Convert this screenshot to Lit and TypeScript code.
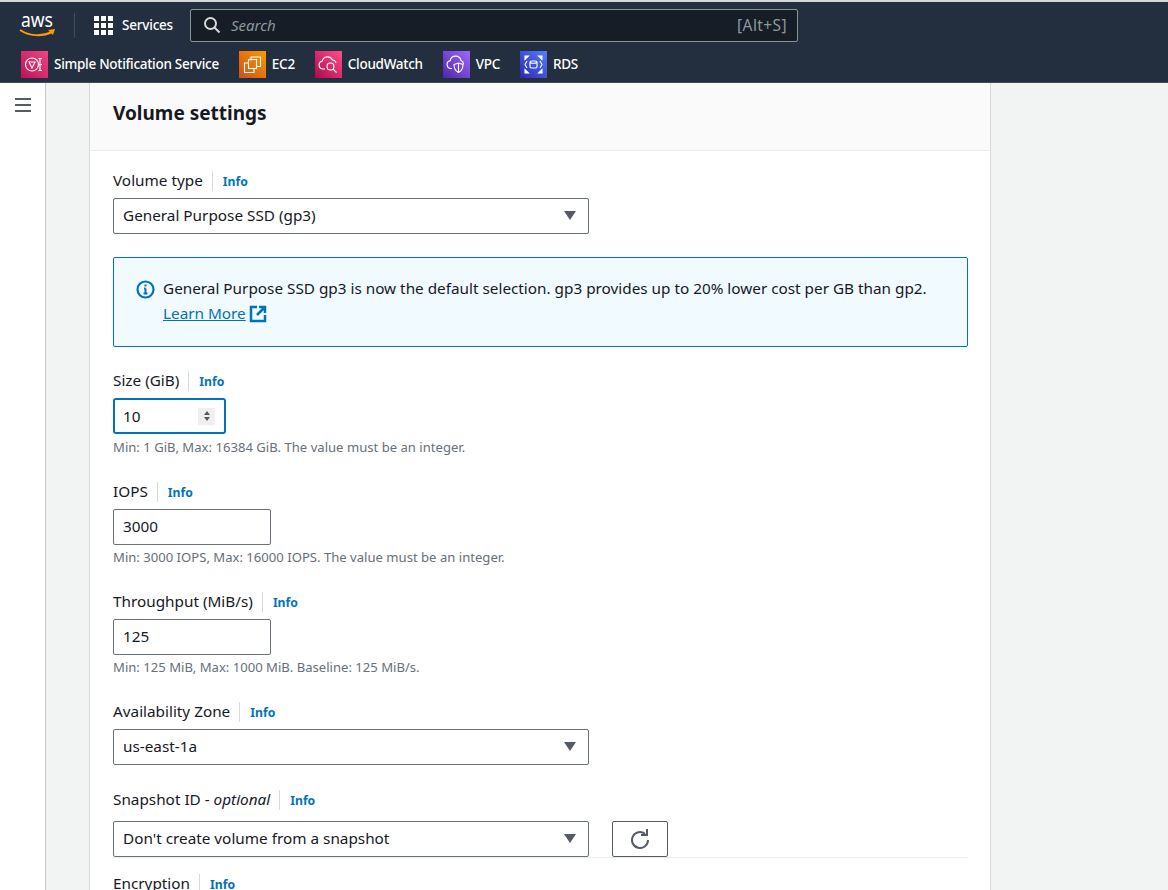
import { LitElement, css, html, svg } from "lit";
import { customElement } from "lit/decorators.js";

const services = [
  {
    name: "Simple Notification Service",
    cls: "sns",
    icon: svg`<circle cx="11" cy="13.5" r="6.5"/><path d="M8 11h6l-3 6z"/><path d="M17.500 7.500h3.500M17.500 13.500h3.500M17.500 19.500h3.500M19 7.500v12"/>`,
  },
  {
    name: "EC2",
    cls: "ec2",
    icon: svg`<path d="M12 9.500V6h9.500v9.500H18"/><rect x="9.500" y="8.500" width="8" height="9"/><path d="M9 12H5.500v9.500H15V18"/>`,
  },
  {
    name: "CloudWatch",
    cls: "cw",
    icon: svg`<path d="M10 18H8a4 4 0 0 1-.8-7.900A5.500 5.500 0 0 1 17.500 9a3.800 3.800 0 0 1 3.500 3"/><circle cx="15.500" cy="15.500" r="3.500"/><path d="M18 18l3.500 3.500"/>`,
  },
  {
    name: "VPC",
    cls: "vpc",
    icon: svg`<path d="M9 17.500H8a4 4 0 0 1-.8-7.900A5.500 5.500 0 0 1 18 9.500a3.800 3.800 0 0 1 2.500 3.500"/><path d="M11 13.500l4.500-1.500 4.500 1.500c0 4-1.500 6.500-4.500 8-3-1.500-4.500-4-4.500-8zM15.500 12v9.500"/>`,
  },
  {
    name: "RDS",
    cls: "rds",
    icon: svg`<rect x="10" y="10" width="7" height="7" rx="1.500"/><path d="M10 11.500c1 1 6 1 7 0M7 10l-2 3.500L7 17M20 10l2 3.500L20 17"/><path d="M5 5h3.500L5 8.500zM22 5h-3.500L22 8.500zM5 22h3.500L5 18.500zM22 22h-3.500l3.500-3.500z" fill="#fff"/>`,
  },
];

@customElement("app-root")
export class AppRoot extends LitElement {
  static styles = css`
    :host {
      display: block;
      height: 890px;
      overflow: hidden;
      font-family: "Noto Sans", "Open Sans", sans-serif;
      font-size: 15.3px;
      color: #16191f;
      background: #f2f3f3;
    }
    * {
      box-sizing: border-box;
    }
    .nav {
      height: 83px;
      background: #232f3e;
      border-top: 2px solid #d5d7d9;
      border-bottom: 1px solid #414d5c;
      color: #fff;
    }
    .nav-top {
      height: 46px;
      display: flex;
      align-items: center;
      padding-left: 20px;
    }
    .aws {
      width: 38px;
      height: 32px;
      flex: none;
      overflow: visible;
    }
    .nav-sep {
      width: 1px;
      height: 25px;
      background: #414d5c;
      margin: 0 18px 0 16px;
    }
    .grid-icon {
      width: 20px;
      height: 20px;
      flex: none;
      fill: #fff;
    }
    .services {
      margin-left: 9px;
      font-size: 13.500px;
      font-weight: 500;
      letter-spacing: -0.2px;
    }
    .search {
      margin-left: 17px;
      width: 608px;
      height: 33px;
      flex: none;
      display: flex;
      align-items: center;
      background: #161d26;
      border: 1px solid #879596;
      border-radius: 2px;
      padding: 0 10px 0 12px;
      color: #8d9a9b;
    }
    .search svg {
      width: 18px;
      height: 18px;
      stroke: #d5dbdb;
      fill: none;
      stroke-width: 2;
      flex: none;
    }
    .search em {
      margin-left: 10px;
      flex: 1;
      font-size: 15px;
    }
    .search span {
      font-size: 15.500px;
      letter-spacing: 0.4px;
    }
    .shortcuts {
      height: 33px;
      display: flex;
      align-items: center;
      padding-left: 21px;
      gap: 20px;
      font-size: 13.500px;
      font-weight: 500;
      letter-spacing: -0.285px;
    }
    .shortcut {
      display: flex;
      align-items: center;
      gap: 6px;
    }
    .shortcut-name {
      margin-bottom: 2px;
    }
    .tile {
      width: 27px;
      height: 27px;
      flex: none;
    }
    .tile svg {
      display: block;
      width: 27px;
      height: 27px;
      fill: none;
      stroke: #fff;
      stroke-width: 1.1;
    }
    .sns {
      background: linear-gradient(45deg, #bc1356, #f34482);
    }
    .ec2 {
      background: linear-gradient(45deg, #c8511b, #ff9900);
    }
    .cw {
      background: linear-gradient(45deg, #b0084d, #ff4f8b);
    }
    .vpc {
      background: linear-gradient(45deg, #4d27a8, #a166ff);
    }
    .rds {
      background: linear-gradient(45deg, #2e27ad, #527fff);
    }
    .body {
      display: flex;
      height: 807px;
    }
    .side {
      width: 46px;
      flex: none;
      background: #fff;
      border-right: 1px solid #c6c6cd;
      padding: 14px 0 0 15px;
    }
    .side svg {
      display: block;
      width: 16px;
      height: 16px;
      stroke: #545b64;
      stroke-width: 2;
    }
    .main {
      flex: none;
      width: 902px;
      margin-left: 43px;
      background: #fff;
      border-left: 1px solid #d5dbdb;
      border-right: 1px solid #d5dbdb;
      overflow: hidden;
    }
    .card-head {
      height: 68px;
      background: #fafafa;
      border-bottom: 1px solid #eaeded;
      padding: 17px 23px 0;
      font-size: 19px;
      font-weight: 700;
      line-height: 26px;
    }
    .card-body {
      padding: 19px 22px 0 23px;
    }
    .label {
      display: flex;
      align-items: center;
      height: 22px;
      line-height: 22px;
      margin-bottom: 6px;
    }
    .label-text {
      margin-bottom: 2px;
    }
    .label em {
      font-style: italic;
    }
    .info {
      margin-left: 9px;
      padding-left: 10px;
      border-left: 1px solid #d5dbdb;
      font-size: 12.200px;
      font-weight: 700;
      color: #0073bb;
      height: 20px;
      line-height: 22px;
    }
    .select,
    .input {
      display: flex;
      align-items: center;
      height: 36px;
      border: 1px solid #687078;
      border-radius: 2px;
      padding: 0 9px 2px;
      background: #fff;
      line-height: 20px;
    }
    .select {
      width: 476px;
      flex: none;
      justify-content: space-between;
      padding-right: 12px;
    }
    .caret {
      width: 0;
      height: 0;
      border-left: 6.500px solid transparent;
      border-right: 6.500px solid transparent;
      border-top: 9px solid #545b64;
    }
    .input {
      width: 158px;
    }
    .input.focus {
      width: 113px;
      border: 2px solid #0073bb;
      border-radius: 3px;
      justify-content: space-between;
      padding: 0 9px 0 8px;
    }
    .spin {
      width: 17px;
      height: 17px;
      background: #efefef;
      display: flex;
      flex-direction: column;
      align-items: center;
      justify-content: center;
      gap: 2px;
    }
    .spin i {
      width: 0;
      height: 0;
      border-left: 3.500px solid transparent;
      border-right: 3.500px solid transparent;
    }
    .spin .up {
      border-bottom: 4px solid #545b64;
    }
    .spin .down {
      border-top: 4px solid #545b64;
    }
    .hint {
      font-size: 13.100px;
      line-height: 16px;
      margin-top: 5px;
      color: #687078;
    }
    .hint.tight {
      margin-top: 4px;
    }
    .alert {
      margin-top: 23px;
      margin-bottom: 23px;
      height: 90px;
      width: 855px;
      background: #f1faff;
      border: 1px solid #0073bb;
      border-radius: 2px;
      padding: 18px 22px;
      display: flex;
      gap: 8px;
      line-height: 25px;
    }
    .alert svg {
      width: 19px;
      height: 19px;
      flex: none;
      margin-top: 4px;
    }
    .alert a {
      color: #0073bb;
      text-decoration: underline;
      display: inline-flex;
      align-items: center;
      gap: 3px;
    }
    .alert a svg {
      width: 18px;
      height: 18px;
      margin: 0;
    }
    .gap-iops {
      margin-top: 26px;
    }
    .gap-tp {
      margin-top: 26px;
    }
    .gap-az {
      margin-top: 26px;
    }
    .gap-snap {
      margin-top: 24px;
      margin-bottom: 10px;
    }
    .snap-row {
      display: flex;
      width: 855px;
      border-bottom: 1px solid #eaeded;
      gap: 23px;
      height: 37px;
    }
    .refresh {
      width: 56px;
      height: 36px;
      border: 1px solid #545b64;
      border-radius: 2px;
      display: flex;
      align-items: center;
      justify-content: center;
    }
    .refresh svg {
      width: 20px;
      height: 20px;
      fill: none;
      stroke: #545b64;
      stroke-width: 2;
    }
    .gap-enc {
      margin-top: 15px;
    }
  `;

  private label(text: unknown, extra = "") {
    return html`<div class="label ${extra}">
      <span class="label-text">${text}</span><span class="info">Info</span>
    </div>`;
  }

  render() {
    return html`
      <div class="nav">
        <div class="nav-top">
          <svg class="aws" viewBox="0 0 38 32" aria-hidden="true">
            <text x="1" y="18" font-size="20" fill="#fff" font-family="Noto Sans, sans-serif" textLength="32" lengthAdjust="spacingAndGlyphs">aws</text>
            <path d="M0 21c9 6 22 7 32 2" fill="none" stroke="#ff9900" stroke-width="2" />
            <path d="M28 21l7-1-2 6z" fill="#ff9900" />
          </svg>
          <span class="nav-sep"></span>
          <svg class="grid-icon" viewBox="0 0 20 20" aria-hidden="true">
            ${[1, 8, 15].map((y) =>
              [1, 8, 15].map(
                (x) => svg`<rect x=${x} y=${y} width="5" height="5" />`
              )
            )}
          </svg>
          <span class="services">Services</span>
          <div class="search">
            <svg viewBox="0 0 18 18" aria-hidden="true">
              <circle cx="7.500" cy="7.500" r="5.500" />
              <path d="M11.500 11.500l5 5" />
            </svg>
            <em>Search</em>
            <span>[Alt+S]</span>
          </div>
        </div>
        <div class="shortcuts">
          ${services.map(
            (s) => html`<div class="shortcut">
              <span class="tile ${s.cls}">
                <svg viewBox="0 0 27 27" aria-hidden="true">${s.icon}</svg>
              </span>
              <span class="shortcut-name">${s.name}</span>
            </div>`
          )}
        </div>
      </div>
      <div class="body">
        <div class="side">
          <svg viewBox="0 0 16 16" aria-hidden="true">
            <path d="M0 2h16M0 8h16M0 14h16" />
          </svg>
        </div>
        <div class="main">
          <div class="card-head">Volume settings</div>
          <div class="card-body">
            ${this.label("Volume type")}
            <div class="select">General Purpose SSD (gp3)<span class="caret"></span></div>
            <div class="alert">
              <svg viewBox="0 0 19 19" aria-hidden="true">
                <circle cx="9.500" cy="9.500" r="8" fill="none" stroke="#0073bb" stroke-width="2.200" />
                <path d="M9.500 8.500v5M7.500 13.500h4M8 8.500h1.500" fill="none" stroke="#0073bb" stroke-width="2" />
                <rect x="8.500" y="4.500" width="2" height="2" fill="#0073bb" />
              </svg>
              <div>
                General Purpose SSD gp3 is now the default selection. gp3 provides up to 20% lower cost per GB than gp2.<br />
                <a>Learn More
                  <svg viewBox="0 0 18 18" aria-hidden="true">
                    <path d="M8 2H2v14h14v-6M10 2h6v6M16 2L8 10" fill="none" stroke="#0073bb" stroke-width="2.500" />
                  </svg>
                </a>
              </div>
            </div>
            ${this.label("Size (GiB)")}
            <div class="input focus">10
              <span class="spin"><i class="up"></i><i class="down"></i></span>
            </div>
            <div class="hint">Min: 1 GiB, Max: 16384 GiB. The value must be an integer.</div>
            ${this.label("IOPS", "gap-iops")}
            <div class="input">3000</div>
            <div class="hint tight">Min: 3000 IOPS, Max: 16000 IOPS. The value must be an integer.</div>
            ${this.label("Throughput (MiB/s)", "gap-tp")}
            <div class="input">125</div>
            <div class="hint tight">Min: 125 MiB, Max: 1000 MiB. Baseline: 125 MiB/s.</div>
            ${this.label("Availability Zone", "gap-az")}
            <div class="select">us-east-1a<span class="caret"></span></div>
            ${this.label(html`Snapshot ID - <em>optional</em>`, "gap-snap")}
            <div class="snap-row">
              <div class="select">Don't create volume from a snapshot<span class="caret"></span></div>
              <div class="refresh">
                <svg viewBox="0 0 20 20" aria-hidden="true">
                  <path d="M18 11a8 8 0 1 1-3-6.200" />
                  <path d="M17 0v6h-6" />
                </svg>
              </div>
            </div>
            ${this.label("Encryption", "gap-enc")}
          </div>
        </div>
      </div>
    `;
  }
}
